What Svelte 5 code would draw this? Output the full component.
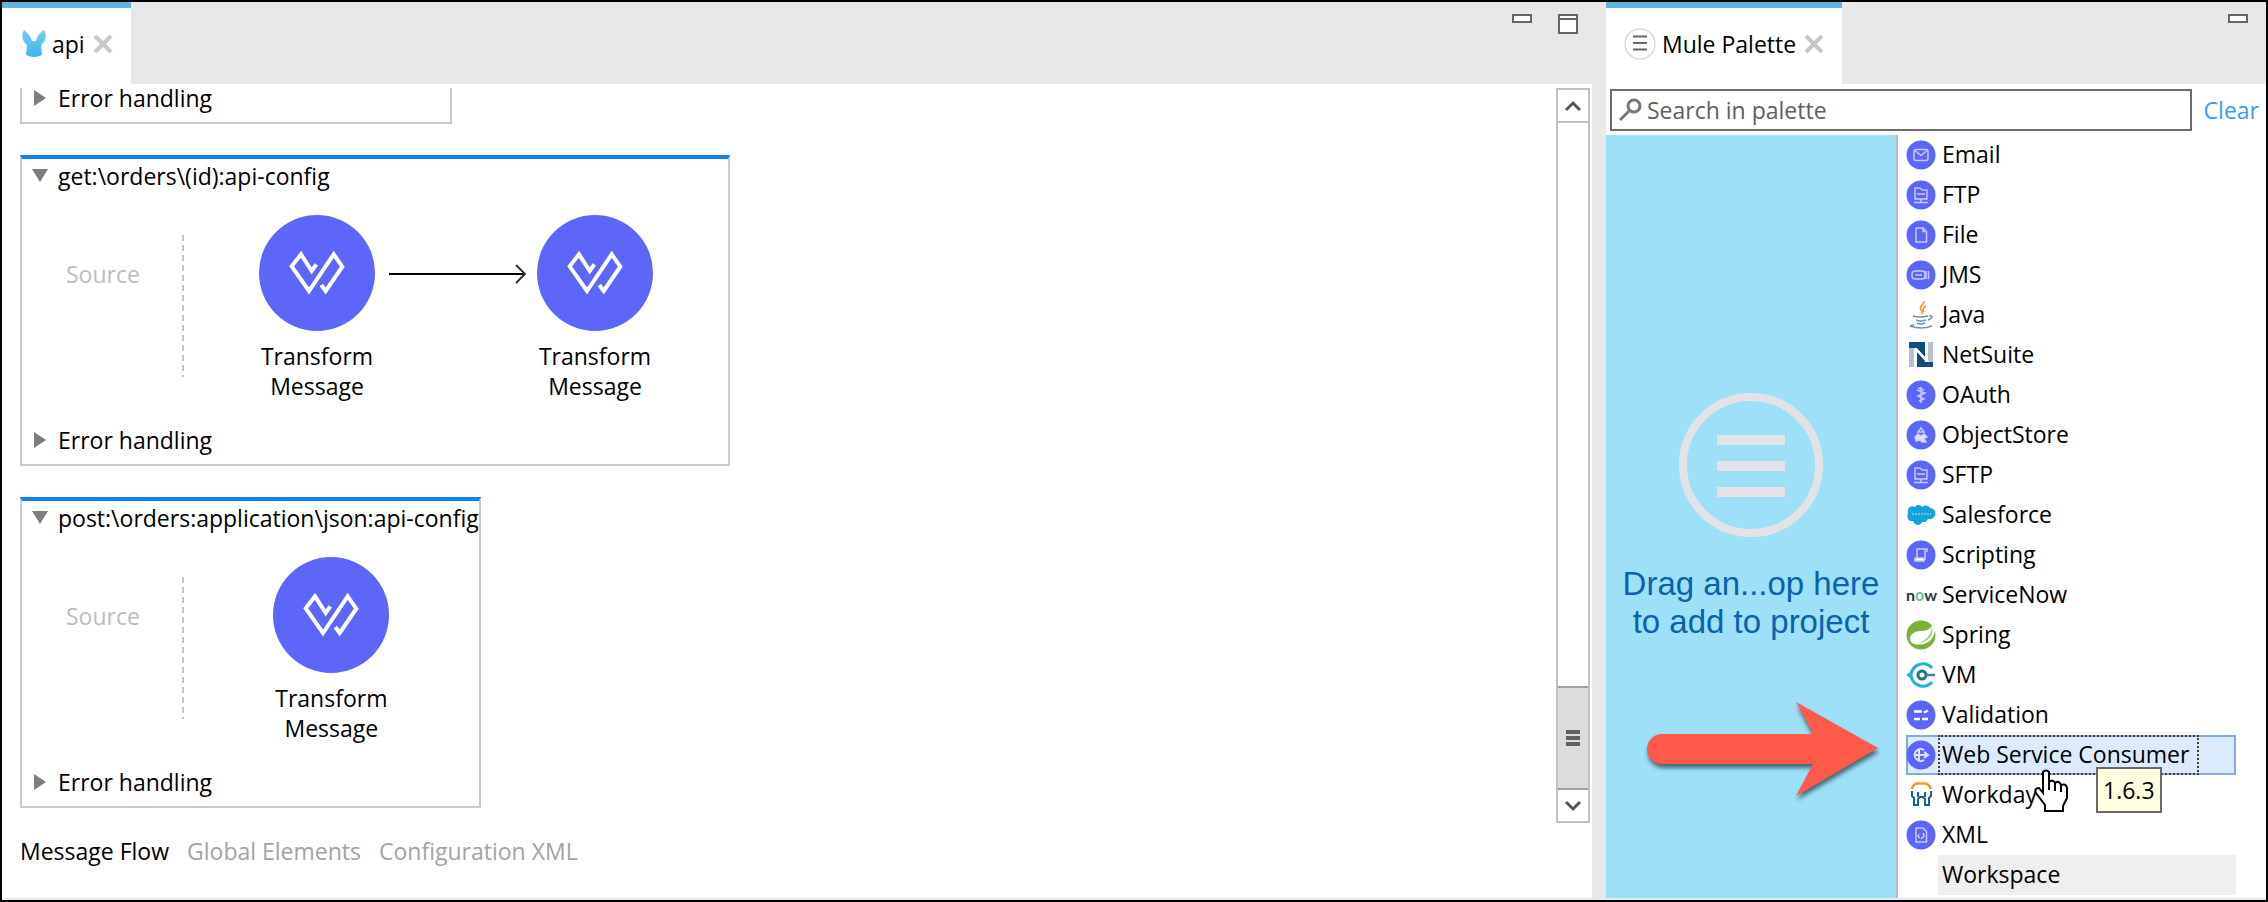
<script lang="ts">
	const flows = [
		{ name: 'get:\\orders\\(id):api-config', nodes: ['Transform Message', 'Transform Message'] },
		{ name: 'post:\\orders:application\\json:api-config', nodes: ['Transform Message'] }
	];

	const views = ['Message Flow', 'Global Elements', 'Configuration XML'];
	let view = $state('Message Flow');

	const modules = [
		{ name: 'Email', icon: 'email', round: true },
		{ name: 'FTP', icon: 'ftp', round: true },
		{ name: 'File', icon: 'file', round: true },
		{ name: 'JMS', icon: 'jms', round: true },
		{ name: 'Java', icon: 'java' },
		{ name: 'NetSuite', icon: 'netsuite' },
		{ name: 'OAuth', icon: 'oauth', round: true },
		{ name: 'ObjectStore', icon: 'store', round: true },
		{ name: 'SFTP', icon: 'ftp', round: true },
		{ name: 'Salesforce', icon: 'salesforce' },
		{ name: 'Scripting', icon: 'script', round: true },
		{ name: 'ServiceNow', icon: 'now' },
		{ name: 'Spring', icon: 'spring' },
		{ name: 'VM', icon: 'vm' },
		{ name: 'Validation', icon: 'validation', round: true },
		{ name: 'Web Service Consumer', icon: 'wsc', round: true, version: '1.6.3' },
		{ name: 'Workday', icon: 'workday' },
		{ name: 'XML', icon: 'xml', round: true },
		{ name: 'Workspace', icon: '' }
	];
	let selected = $state('Web Service Consumer');
	let search = $state('');
</script>

{#snippet closeIcon()}
	<svg width="20" height="20" viewBox="0 0 20 20">
		<path d="M2 2L18 18M18 2L2 18" stroke="#c6c6c6" stroke-width="4" />
	</svg>
{/snippet}

{#snippet minimizeIcon()}
	<svg width="20" height="20" viewBox="0 0 20 20">
		<rect x="1" y="1" width="18" height="7" fill="#fff" stroke="#666" stroke-width="2" />
	</svg>
{/snippet}

{#snippet errorHandling()}
	<div class="flow-line">
		<svg width="16" height="16" viewBox="0 0 16 16"><path d="M2 0L14 8L2 16Z" fill="#7d7d7d" /></svg>
		<span>Error handling</span>
	</div>
{/snippet}

{#snippet moduleIcon(icon: string, round: boolean)}
	<svg width="30" height="30" viewBox="0 0 30 30" fill="none" stroke="#c5c8ff" stroke-width="1.5">
		{#if round}
			<circle cx="15" cy="15" r="14.5" fill="#5b65f8" stroke="none" />
		{/if}
		{#if icon === 'email'}
			<rect x="8" y="9.5" width="14" height="11" rx="2" />
			<path d="M9 10.5L15 15.5L21 10.5" />
		{:else if icon === 'ftp'}
			<path d="M9 19V8H14L16 10H21V19Z M11 14H19 M15 19V22 M8 22.5H22" />
		{:else if icon === 'file'}
			<path d="M10 8H17L20.5 11.5V22H10Z M17 8V11.5H20" />
		{:else if icon === 'jms'}
			<rect x="6" y="11" width="13" height="8" rx="3" />
			<path d="M9 15H16 M20 11V19 M22.5 11V19" />
		{:else if icon === 'java'}
			<path d="M18 1C19 5 12 6 15 10C16 12 17 12 16 14M20 6C16 8 17 10 18 12" stroke="#f5942e" stroke-width="1.6" />
			<path d="M7 16Q14 18 22 16M10 20Q15 22 20 20M11 23Q15 25 19 23M23 16C28 15 26 19 22 20M4 26Q15 30 26 26M4 26Q6 25 8 25" stroke="#6f93a8" stroke-width="1.5" />
		{:else if icon === 'netsuite'}
			<path d="M3 8H8V27H3Z M22 2H27V22H22Z" fill="#b4c3d2" stroke="none" />
			<path d="M3 2H19V17L10 8H3Z M11 12L20 22H27V27H11Z" fill="#0f4d7c" stroke="none" />
			<path d="M8 9H10.5L20 20V22H22V27M10 9V27" stroke="#fff" stroke-width="2" />
			<path d="M11.5 14V27H27V22H19Z" fill="#0f4d7c" stroke="none" />
		{:else if icon === 'oauth'}
			<path d="M15 7V23M11 10L19 13L12 16L18 19L13 21M12 8L18 10" />
		{:else if icon === 'store'}
			<path d="M15 8L18 12H12Z" />
			<path d="M9 17L12 14L15 16L18 14L21 17L18 19L20 22H16L14 20L10 21Z" fill="#dfe1ff" />
		{:else if icon === 'salesforce'}
			<path
				d="M2 13C1 8 5 5 9 7C11 4 15 5 16 7C20 4 23 6 24 8C29 8 31 14 28 17C26 20 23 19 22 19C20 23 17 22 16 22C14 27 8 25 7 21C3 22 0 18 2 13Z"
				fill="#14a2dc"
				stroke="none"
			/>
			<path d="M6 14H25" stroke="#7fd0f0" stroke-dasharray="2 1" />
		{:else if icon === 'script'}
			<path d="M11 20V9H21V12M19 9V20" />
			<path d="M9 18H18V21H9Z" fill="#fff" />
		{:else if icon === 'spring'}
			<circle cx="15" cy="15" r="14.5" fill="#7bb13c" stroke="none" />
			<path d="M28 1C31 12 27 22 18 24C12 25 7 25 5 22C2 16 7 11 15 11C22 11 26 8 28 1Z" fill="#fff" stroke="none" />
			<path d="M26 6C28 16 22 22 12 23C20 21 25 15 26 6Z" fill="#a5cb7c" stroke="none" />
			<path d="M7 25Q15 30 23 24" stroke="#7bb13c" stroke-width="3" />
		{:else if icon === 'vm'}
			<path d="M26 8A12 12 0 0 0 5 15A12 12 0 0 0 26 22" stroke="#27aed6" stroke-width="3" />
			<path d="M0 15L6 11V19Z" fill="#27aed6" stroke="none" />
			<circle cx="16" cy="15" r="4" stroke="#167591" stroke-width="3" />
			<path d="M20 15H29" stroke="#3b8499" stroke-width="2.5" />
		{:else if icon === 'validation'}
			<path d="M8 11.5H16M18 12.5L22 10.5M8 19H14M16 19H22" stroke="#fff" stroke-width="2.5" />
		{:else if icon === 'wsc'}
			<path d="M18 10A6 6 0 1 0 18 20M8 15H22M13 10V20M18 12L22 15L18 18" stroke="#e0e2ff" stroke-width="2" />
		{:else if icon === 'workday'}
			<path d="M6 9Q7 4 11 3.5H19Q23 4 25 9" stroke="#f39c1f" stroke-width="2.5" />
			<path d="M6 11V16L8 18V25H12V19L14 17H17L19 19V25H23V18L25 16V11M12 12V17M19 12V17" stroke="#17609f" stroke-width="2" />
		{:else if icon === 'xml'}
			<path d="M10 8H17L20.5 11.5V22H10Z M13 14L12 16L14 18M17 13L18 16L15 19" />
		{/if}
	</svg>
{/snippet}

<main class="studio">
	<section class="editor">
		<header class="tab-bar">
			<div class="tab">
				<svg width="24" height="28" viewBox="0 0 24 28">
					<defs>
						<linearGradient id="mule" x1="0" y1="0" x2="0" y2="1">
							<stop offset="0" stop-color="#79c9ec" />
							<stop offset="1" stop-color="#3bb7ee" />
						</linearGradient>
					</defs>
					<path d="M2 0C-1 5 0 11 5 15L4 25Q12 29 20 25L19 15C24 11 25 5 22 0C17 3 15 7 14 11H10C9 7 6 3 2 0Z" fill="url(#mule)" />
				</svg>
				<span class="tab-title">api</span>
				<button class="icon-button" aria-label="Close api">{@render closeIcon()}</button>
			</div>
			<div class="window-buttons">
				<button class="icon-button" aria-label="Minimize editor">{@render minimizeIcon()}</button>
				<button class="icon-button" aria-label="Maximize editor">
					<svg width="20" height="20" viewBox="0 0 20 20">
						<path d="M1 1H19V19H1ZM1 5H19" fill="#fff" stroke="#666" stroke-width="2" />
					</svg>
				</button>
			</div>
		</header>

		<div class="workarea">
			<div class="canvas">
				<article class="flow scrolled">
					{@render errorHandling()}
				</article>

				{#each flows as flow}
					<article class="flow open">
						<div class="flow-line">
							<svg width="16" height="16" viewBox="0 0 16 16"><path d="M0 1H16L8 14Z" fill="#7d7d7d" /></svg>
							<span>{flow.name}</span>
						</div>
						<div class="flow-body">
							<div class="source">Source</div>
							<div class="nodes">
								{#each flow.nodes as node, i}
									{#if i > 0}
										<svg class="connector" width="138" height="20" viewBox="0 0 138 20" fill="none">
											<path d="M0 10H136" stroke="#000" stroke-width="2" />
											<path d="M127 1L136 10L127 19" stroke="#333" stroke-width="2" />
										</svg>
									{/if}
									<div class="node">
										<svg width="116" height="116" viewBox="0 0 116 116">
											<circle cx="58" cy="58" r="58" fill="#5e66f9" />
											<path
												d="M57.3 49.3L52.7 56L42 39.3L32.7 51.3L50 76L74.7 39.3L83.3 51.7L66.7 76L62.3 70"
												fill="none"
												stroke="#fff"
												stroke-width="4"
											/>
										</svg>
										<span>{node}</span>
									</div>
								{/each}
							</div>
						</div>
						{@render errorHandling()}
					</article>
				{/each}
			</div>

			<div class="scrollbar">
				<button class="scroll-button" aria-label="Scroll up">
					<svg width="16" height="12" viewBox="0 0 16 12"><path d="M1 10L8 3L15 10" fill="none" stroke="#555" stroke-width="3" /></svg>
				</button>
				<div class="track">
					<div class="thumb">
						<svg width="14" height="18" viewBox="0 0 14 18"><path d="M0 3H14M0 9H14M0 15H14" stroke="#606060" stroke-width="4" /></svg>
					</div>
				</div>
				<button class="scroll-button" aria-label="Scroll down">
					<svg width="16" height="12" viewBox="0 0 16 12"><path d="M1 2L8 9L15 2" fill="none" stroke="#555" stroke-width="3" /></svg>
				</button>
			</div>
		</div>

		<nav class="views">
			{#each views as v}
				<button class:active={v === view} onclick={() => (view = v)}>{v}</button>
			{/each}
		</nav>
	</section>

	<aside class="palette">
		<header class="tab-bar">
			<div class="tab">
				<svg width="32" height="32" viewBox="0 0 32 32" fill="none">
					<circle cx="16" cy="16" r="15" stroke="#dcdcdc" stroke-width="1.5" />
					<path d="M9 8.5H23M9 15H23M9 21.5H23" stroke="#666" stroke-width="2" />
				</svg>
				<span class="tab-title">Mule Palette</span>
				<button class="icon-button" aria-label="Close Mule Palette">{@render closeIcon()}</button>
			</div>
			<div class="window-buttons">
				<button class="icon-button" aria-label="Minimize palette">{@render minimizeIcon()}</button>
			</div>
		</header>

		<div class="search-row">
			<label class="search">
				<svg width="24" height="24" viewBox="0 0 24 24" fill="none" stroke="#777">
					<circle cx="15" cy="8" r="6" stroke-width="3" />
					<path d="M11 12L1 22" stroke-width="3" />
				</svg>
				<input type="text" aria-label="Search in palette" placeholder="Search in palette" bind:value={search} />
			</label>
			<button class="clear" onclick={() => (search = '')}>Clear</button>
		</div>

		<div class="palette-body">
			<div class="drop-zone">
				<svg width="144" height="144" viewBox="0 0 144 144" fill="none" stroke="#e2e3e6">
					<circle cx="72" cy="72" r="68" stroke-width="8" />
					<path d="M38 47H106M38 73H106M38 99H106" stroke-width="10" />
				</svg>
				<p>Drag an...op here<br />to add to project</p>
				<svg class="pointer-arrow" width="232" height="96" viewBox="0 0 232 96">
					<path d="M15 33H166L149 1L231 47L149 95L166 63H15A15 15 0 0 1 15 33Z" fill="#ff594b" />
				</svg>
			</div>

			<ul class="modules">
				{#each modules as m}
					<li class="module" class:selected={m.name === selected} class:plain={!m.icon}>
						<button onclick={() => (selected = m.name)}>
							{#if m.icon === 'now'}
								<span class="now-logo">n<b>o</b>w</span>
							{:else}
								{@render moduleIcon(m.icon, !!m.round)}
							{/if}
							<span class="module-name">{m.name}</span>
						</button>
						{#if m.version && m.name === selected}
							<svg class="cursor" width="36" height="44" viewBox="0 0 36 44">
								<path
									d="M9 3Q12 0 15 3V13Q19 10 21 14Q25 11 27 16Q32 14 33 19V29L29 37V42H11V36L2 24Q0 19 5 19L9 24Z"
									fill="#fff"
									stroke="#000"
									stroke-width="2"
								/>
								<path d="M15 13V21M21 14V22M27 16V23" stroke="#000" stroke-width="2" />
							</svg>
							<span class="tooltip" role="tooltip">{m.version}</span>
						{/if}
					</li>
				{/each}
			</ul>
		</div>
	</aside>
</main>

<style>
	:global(body) {
		margin: 0;
	}

	.studio {
		box-sizing: border-box;
		display: flex;
		gap: 14px;
		min-height: 100vh;
		padding-bottom: 2px;
		border: 2px solid #000;
		background: #e7e8ea;
		color: #000;
		font-family: 'Open Sans', 'Noto Sans', sans-serif;
		font-size: 23px;
		line-height: 30px;
	}

	button {
		padding: 0;
		border: none;
		background: none;
		color: inherit;
		font: inherit;
		cursor: pointer;
	}

	svg {
		display: block;
		flex: none;
	}

	.editor {
		flex: 1;
		min-width: 0;
		display: flex;
		flex-direction: column;
	}

	.palette {
		width: 660px;
		flex: none;
		display: flex;
		flex-direction: column;
		background: #fff;
	}

	/* tabs */
	.tab-bar {
		display: flex;
		justify-content: space-between;
		height: 82px;
		background: #e7e8ea;
	}

	.tab {
		box-sizing: border-box;
		display: flex;
		align-items: center;
		padding: 0 18px 4px;
		border-top: 6px solid #62b4e0;
		background: #fff;
	}

	.editor .tab {
		padding-left: 20px;
	}

	.tab-title {
		margin: 0 8px 0 6px;
		white-space: nowrap;
	}

	.window-buttons {
		display: flex;
		align-items: flex-start;
		gap: 26px;
		padding: 12px 14px 0 0;
	}

	.palette .window-buttons {
		padding-right: 18px;
	}

	/* flow editor */
	.workarea {
		flex: 1;
		display: flex;
		padding: 4px 2px 0 18px;
		background: #fff;
	}

	.canvas {
		flex: 1;
		min-width: 0;
		display: flex;
		flex-direction: column;
		align-items: flex-start;
		gap: 31px;
	}

	.flow {
		box-sizing: border-box;
		padding: 2px 0 9px;
		border: 2px solid #cbcbcb;
	}

	.flow.open {
		border-top: 4px solid #0a84ea;
	}

	.flow.scrolled {
		width: 432px;
		padding: 0 0 14px;
		border-top: none;
		line-height: 20px;
	}

	.flow-line {
		display: flex;
		align-items: center;
		gap: 10px;
		padding-left: 10px;
		white-space: nowrap;
	}

	.flow-body {
		display: flex;
		padding: 24px 0;
	}

	.source {
		box-sizing: border-box;
		width: 162px;
		height: 142px;
		margin-top: 20px;
		padding: 24px 0 0 44px;
		background: repeating-linear-gradient(#c4c4c4 0 6px, transparent 6px 10px) right / 2px 100% no-repeat;
		color: #bdbdbd;
	}

	.nodes {
		flex: 1;
		display: flex;
		justify-content: center;
		padding: 0 75px;
	}

	.node {
		display: flex;
		flex-direction: column;
		gap: 10px;
		width: 116px;
		text-align: center;
	}

	.connector {
		margin: 49px 10px 0 14px;
	}

	.scrollbar {
		box-sizing: border-box;
		display: flex;
		flex-direction: column;
		width: 34px;
		border: 2px solid #c1c1c1;
	}

	.scroll-button {
		display: grid;
		place-items: center;
		height: 31px;
	}

	.track {
		flex: 1;
		display: flex;
		flex-direction: column;
		justify-content: flex-end;
		border-top: 2px solid #c1c1c1;
	}

	.thumb {
		display: grid;
		place-items: center;
		height: 15%;
		border: solid #a0a0a0;
		border-width: 2px 0;
		background: #dcdcdc;
	}

	.views {
		display: flex;
		gap: 18px;
		padding: 13px 18px 32px;
		background: #fff;
	}

	.views button {
		color: #a3a3a3;
	}

	.views .active {
		color: #000;
	}

	/* palette */
	.search-row {
		display: flex;
		padding: 5px 7px 4px 4px;
	}

	.search {
		box-sizing: border-box;
		flex: 1;
		display: flex;
		align-items: center;
		gap: 4px;
		height: 42px;
		padding: 0 7px;
		border: 2px solid #6e6e6e;
	}

	.search input {
		flex: 1;
		min-width: 0;
		padding: 0;
		border: none;
		outline: none;
		background: none;
		color: #000;
		font: inherit;
	}

	.search input::placeholder {
		color: #606060;
		opacity: 1;
	}

	.clear {
		margin-left: 12px;
		color: #3b99fc;
	}

	.palette-body {
		flex: 1;
		display: flex;
	}

	.drop-zone {
		position: relative;
		width: 290px;
		display: flex;
		flex-direction: column;
		align-items: center;
		justify-content: center;
		gap: 28px;
		border-right: 2px solid #bdbdbd;
		background: #9de0f8;
		color: #0a62ab;
		font: 33px/38px 'Liberation Sans', Arial, sans-serif;
		text-align: center;
	}

	.drop-zone p {
		margin: 0;
		white-space: nowrap;
	}

	.pointer-arrow {
		position: absolute;
		right: 17px;
		top: 566px;
		filter: drop-shadow(1px 4px 2px #0008);
	}

	.modules {
		flex: 1;
		margin: 0;
		padding: 0 30px 0 8px;
		list-style: none;
	}

	.module {
		position: relative;
		height: 40px;
	}

	.module button {
		box-sizing: border-box;
		display: flex;
		align-items: center;
		gap: 2px;
		width: 100%;
		height: 40px;
		text-align: left;
	}

	.module-name {
		box-sizing: border-box;
		height: 40px;
		padding: 0 10px 0 4px;
		line-height: 38px;
		white-space: nowrap;
	}

	.selected button {
		background: #dbeafd;
		box-shadow: inset 0 0 0 2px #83abdd;
	}

	.selected .module-name {
		outline: 2px dotted #4d3a22;
		outline-offset: -2px;
	}

	.plain .module-name {
		flex: 1;
		background: #efefef;
	}

	.now-logo {
		width: 30px;
		color: #24383c;
		font: 700 16px/20px Lato, sans-serif;
		text-align: center;
	}

	.now-logo b {
		color: #7fbf9f;
	}

	.cursor {
		position: absolute;
		left: 128px;
		top: 34px;
		z-index: 1;
	}

	.tooltip {
		position: absolute;
		left: 190px;
		top: 32px;
		z-index: 1;
		padding: 6px 5px;
		border: 2px solid #6a6a6a;
		background: #ffffe1;
	}
</style>
